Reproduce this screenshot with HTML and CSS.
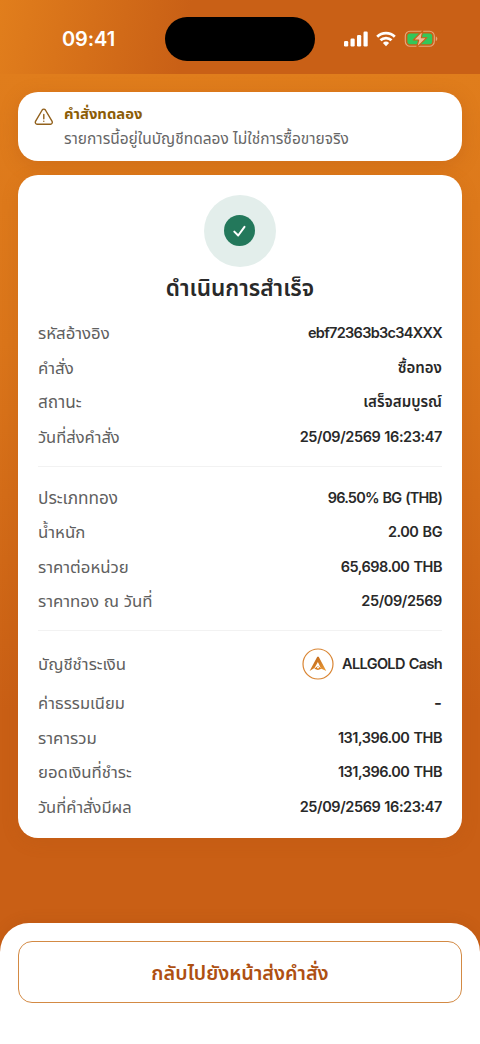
FILE: index.html
```html
<!DOCTYPE html>
<html lang="th">
<head>
<meta charset="utf-8">
<meta name="viewport" content="width=device-width, initial-scale=1">
<title>ดำเนินการสำเร็จ</title>
<link rel="stylesheet" href="styles.css">
</head>
<body>
<div class="screen">
  <header class="status">
    <span class="time">09:41</span>
    <span class="island"></span>
    <span class="indicators">
      <svg class="signal" width="24" height="16" viewBox="0 0 24 16" fill="#fff"><rect x="0" y="10" width="4.2" height="5.4" rx="1.2"/><rect x="6.5" y="7.5" width="4.2" height="7.9" rx="1.2"/><rect x="13" y="4" width="4.2" height="11.4" rx="1.2"/><rect x="19.5" y="0.5" width="4.2" height="14.9" rx="1.2"/></svg>
      <svg class="wifi" width="20" height="16" viewBox="0 0 20 16" fill="none" stroke="#fff" stroke-width="2.8"><path d="M1.2 5.7a12.6 12.6 0 0 1 17.6 0"/><path d="M4.5 9.3a7.9 7.9 0 0 1 11 0"/><path d="M10 15.2 6.9 12a4.5 4.5 0 0 1 6.2 0z" fill="#fff" stroke="none"/></svg>
      <svg class="battery" width="34" height="18" viewBox="0 0 34 18"><rect x="1.3" y="1.3" width="29" height="15" rx="4.7" fill="none" stroke="#e5a77a" stroke-width="1.1"/><rect x="3.4" y="3.4" width="24.8" height="10.8" rx="2.8" fill="#33c759"/><path d="M31.8 6.6c2 .7 2 3.8 0 4.5z" fill="#e5a77a"/><path d="M18.8.6 9.4 10h5.3l-2 7.6L22.8 7.7h-5.4z" fill="#f1b995" stroke="#c96016" stroke-width="1.1" stroke-linejoin="round"/></svg>
    </span>
  </header>
  <main class="content">
    <section class="notice">
      <svg class="warn" width="20" height="20" viewBox="0 0 20 20" fill="none" stroke="#91601b" stroke-width="1.4" stroke-linecap="round" stroke-linejoin="round"><path d="M8.2 3 1.5 14.4a1.9 1.9 0 0 0 1.6 2.8h13.4a1.9 1.9 0 0 0 1.6-2.8L11.4 3a1.9 1.9 0 0 0-3.2 0z"/><path d="M9.8 7.5v4.2M9.8 14.2v.1"/></svg>
      <div class="notice-text"><strong>คำสั่งทดลอง</strong><p>รายการนี้อยู่ในบัญชีทดลอง ไม่ใช่การซื้อขายจริง</p></div>
    </section>
    <section class="receipt">
      <div class="halo"><span class="badge"><svg width="31" height="31" viewBox="0 0 31 31" fill="none" stroke="#fff" stroke-width="2" stroke-linecap="round" stroke-linejoin="round"><path d="m10.3 16.6 3.9 3.9 6.3-8.7"/></svg></span></div>
      <h1>ดำเนินการสำเร็จ</h1>
      <dl class="rows">
        <div><dt>รหัสอ้างอิง</dt><dd class="code">ebf72363b3c34XXX</dd></div>
        <div><dt>คำสั่ง</dt><dd class="thai">ซื้อทอง</dd></div>
        <div><dt class="wide">สถานะ</dt><dd class="thai">เสร็จสมบูรณ์</dd></div>
        <div><dt class="narrow">วันที่ส่งคำสั่ง</dt><dd class="date">25/09/2569 16:23:47</dd></div>
      </dl>
      <dl class="rows ruled">
        <div><dt class="wide">ประเภททอง</dt><dd class="code product">96.50% BG (THB)</dd></div>
        <div><dt>น้ำหนัก</dt><dd>2.00 BG</dd></div>
        <div><dt>ราคาต่อหน่วย</dt><dd>65,698.00 THB</dd></div>
        <div><dt>ราคาทอง ณ วันที่</dt><dd class="date">25/09/2569</dd></div>
      </dl>
      <dl class="rows ruled payment">
        <div class="account"><dt>บัญชีชำระเงิน</dt><dd><svg width="32" height="32" viewBox="0 0 32 32"><defs><linearGradient id="gold" x1="0" y1="0" x2="1" y2="1"><stop stop-color="#b95d13"/><stop offset="1" stop-color="#eda03b"/></linearGradient></defs><circle cx="16" cy="16" r="15" fill="#fff" stroke="#d98533" stroke-width="1.2"/><path d="M15.3 8.8h1.4l7.6 14.1-5.4-2.3-3-6.5-3.4 6-4.9 2.8z" fill="url(#gold)"/><path d="m12.3 20.7 3.6-2.7 3.6 2.7-3.6 1.4z" fill="#db7d1d"/><circle cx="16" cy="19.6" r="1" fill="#fff"/></svg><span>ALLGOLD Cash</span></dd></div>
        <div><dt class="narrow">ค่าธรรมเนียม</dt><dd class="none">-</dd></div>
        <div><dt>ราคารวม</dt><dd>131,396.00 THB</dd></div>
        <div><dt>ยอดเงินที่ชำระ</dt><dd>131,396.00 THB</dd></div>
        <div><dt class="narrow">วันที่คำสั่งมีผล</dt><dd class="date">25/09/2569 16:23:47</dd></div>
      </dl>
    </section>
  </main>
  <footer class="actions"><button>กลับไปยังหน้าส่งคำสั่ง</button></footer>
</div>
</body>
</html>
```
FILE: styles.css
```css
* { box-sizing: border-box; }
body { margin: 0; font-family: Inter, "Noto Sans Thai", "Noto Sans", sans-serif; }
.screen { width: 480px; height: 1044px; overflow: hidden; display: flex; flex-direction: column; background: linear-gradient(180deg, #e07d1c 7%, #da751a 33%, #c95f15 68%); }
.status { height: 74px; flex: none; display: flex; align-items: center; padding: 4px 42px 0 62px; background: linear-gradient(100deg, #e17e1c, #c96016 39%); }
.time { width: 103px; color: #fff; font-size: 20px; font-weight: 600; letter-spacing: -.1px; }
.island { width: 150px; height: 44px; border-radius: 22px; background: #000; }
.indicators { margin-left: auto; display: flex; align-items: center; gap: 8px; }
.content { padding: 18px 18px 0; flex: 1; }
.notice { height: 69px; border-radius: 20px; background: #fff; padding: 12px 16px; display: flex; gap: 10px; box-shadow: 0 4px 18px #a54d1240; }
.warn { margin-top: 3px; flex: none; }
.notice-text { white-space: nowrap; }
.notice strong { display: block; font-size: 14.8px; line-height: 20px; color: #8c5c06; }
.notice p { margin: 4px 0 0; font-size: 15.5px; line-height: 22px; color: #666; }
.receipt { margin-top: 14px; height: 663px; border-radius: 20px; background: #fff; padding: 20px; box-shadow: 0 4px 18px #a54d1224; }
.halo { width: 72px; height: 72px; border-radius: 50%; background: #e3eeeb; margin: 0 auto; display: grid; place-items: center; }
.badge { width: 31px; height: 31px; border-radius: 50%; background: #23785b; display: flex; margin: 0 1px 1px 0; }
h1 { margin: 6px 0 13px; height: 30px; line-height: 30px; text-align: center; font-size: 22.6px; font-weight: 600; color: #292929; white-space: nowrap; }
.rows { margin: 0; color: #292929; }
.rows > div { height: 34.6px; display: flex; align-items: center; justify-content: space-between; white-space: nowrap; }
.ruled { border-top: 1px solid #f2f2f2; margin-top: 11.2px; padding-top: 13.8px; }
.payment { padding-top: 12px; }
.rows dt { font-size: 16.8px; color: #606060; line-height: 24px; }
.rows .narrow { font-size: 16.5px; }
.rows .wide { font-size: 17.2px; }
.rows dd { margin: 0; font-size: 14.5px; font-weight: 600; line-height: 24px; letter-spacing: -.5px; word-spacing: 1px; }
.rows .code { letter-spacing: -.7px; word-spacing: 0; }
.rows .product { letter-spacing: -.8px; word-spacing: 1px; }
.rows .date { letter-spacing: -.4px; word-spacing: .6px; }
.rows .thai { font-size: 15px; letter-spacing: 0; }
.rows .none { letter-spacing: 0; font-size: 17px; }
.rows > .account { height: 43px; }
.account dd { display: flex; align-items: center; gap: 8px; }
.account span { letter-spacing: -.65px; }
.actions { height: 121px; flex: none; padding: 18px 18px 0; background: #fff; border-radius: 29px 29px 0 0; box-shadow: 0 -3px 12px #913f0d20; }
button { width: 100%; height: 62px; border: 1px solid #d38a44; border-radius: 14px; background: #fff; color: #ae5012; font: 600 19.8px/28px Inter, "Noto Sans Thai", "Noto Sans", sans-serif; padding: 1px 0 0; white-space: nowrap; }
```
